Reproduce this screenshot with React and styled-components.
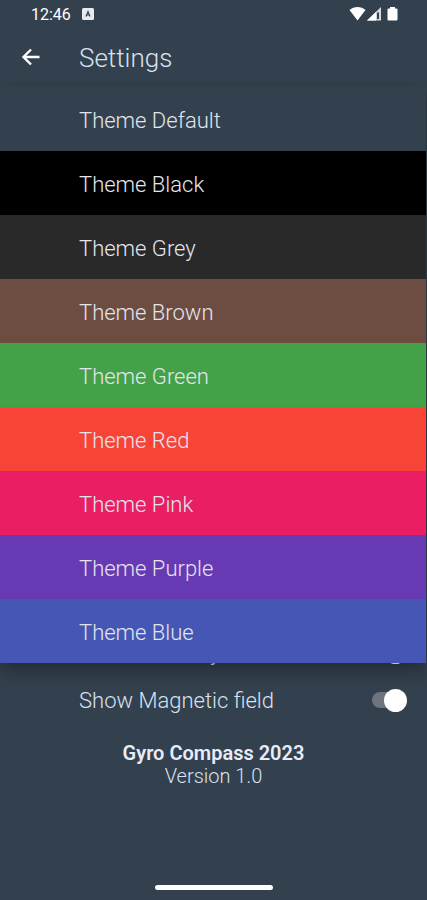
import React, { useState } from "react";
import styled, { createGlobalStyle } from "styled-components";

const themes = [
    { id: "default", name: "Theme Default", color: "#33404d" },
    { id: "black", name: "Theme Black", color: "#000000" },
    { id: "grey", name: "Theme Grey", color: "#292929" },
    { id: "brown", name: "Theme Brown", color: "#6d4c41" },
    { id: "green", name: "Theme Green", color: "#43a148" },
    { id: "red", name: "Theme Red", color: "#f84437" },
    { id: "pink", name: "Theme Pink", color: "#e91e63" },
    { id: "purple", name: "Theme Purple", color: "#673ab4" },
    { id: "blue", name: "Theme Blue", color: "#4556b5" },
];

const switches = [
    { id: "intensity", label: "Show Intensity" },
    { id: "magnetic", label: "Show Magnetic field" },
];

const StatusIcons = () => (
    <svg width="50" height="16" viewBox="0 0 50 16" fill="#fff" aria-hidden="true">
        <path d="M0.5 4C5 0 12 0 16.5 4L8.500 14.500Z" />
        <path d="M18 14.500L32 1V14.500Z" fill="#d5d9df" />
        <path d="M18 14.500L27 6V14.500Z" />
        <path d="M28 6.500H30V13H28Z" fill="#33404d" />
        <path d="M39.500 2.500H41V1H46V2.500H47.500Q48.500 2.500 48.500 3.500V13.500Q48.500 14.500 47.500 14.500H39.500Q38.500 14.500 38.500 13.500V3.500Q38.500 2.500 39.500 2.500Z" />
    </svg>
);

const App = () => {
    const [theme, setTheme] = useState("default");
    const [values, setValues] = useState({ intensity: true, magnetic: true });

    const toggle = (id) => setValues({ ...values, [id]: !values[id] });

    return (
        <Screen>
            <GlobalStyle />
            <StatusBar>
                <Clock>12:46</Clock>
                <Badge viewBox="0 0 12 12" aria-hidden="true">
                    <rect width="12" height="12" rx="1.500" fill="#e8ebee" />
                    <path d="M4 8.500L6 3.500L8 8.500M4.500 7H7.500" fill="none" stroke="#33404d" strokeWidth="1.200" />
                </Badge>
                <StatusIcons />
            </StatusBar>
            <AppBar>
                <BackButton type="button" aria-label="Back">
                    <svg width="20" height="20" viewBox="0 0 20 20" fill="none" stroke="#fff" strokeWidth="2.400">
                        <path d="M18.500 9H3M10 1.500L2.500 9L10 16.500" />
                    </svg>
                </BackButton>
                <h1>Settings</h1>
            </AppBar>
            <ThemeMenu>
                {themes.map((item) => (
                    <ThemeOption
                        key={item.id}
                        type="button"
                        $color={item.color}
                        aria-pressed={theme === item.id}
                        onClick={() => setTheme(item.id)}
                    >
                        {item.name}
                    </ThemeOption>
                ))}
            </ThemeMenu>
            <SettingsList>
                {switches.map((item) => (
                    <SettingRow key={item.id} htmlFor={item.id}>
                        <span>{item.label}</span>
                        <Switch id={item.id} type="checkbox" checked={values[item.id]} onChange={() => toggle(item.id)} />
                    </SettingRow>
                ))}
            </SettingsList>
            <About>
                <strong>Gyro Compass 2023</strong>
                <span>Version 1.0</span>
            </About>
            <HomeBar />
        </Screen>
    );
};

export default App;

const GlobalStyle = createGlobalStyle`
    * {
        box-sizing: border-box;
    }

    body {
        margin: 0;
        background: #33404d;
        font-family: Roboto, sans-serif;
    }
`;

const Screen = styled.div`
    min-height: 100vh;
    display: flex;
    flex-direction: column;
    background: #33404d;
    color: #d9e0f0;
    font-size: 22px;
    font-weight: 300;
`;

const StatusBar = styled.div`
    height: 28px;
    padding: 0 28px 0 31px;
    display: flex;
    align-items: center;

    > svg:last-child {
        margin-left: auto;
    }
`;

const Clock = styled.span`
    font-size: 16px;
    font-weight: 400;
    color: #fff;
`;

const Badge = styled.svg`
    width: 12px;
    height: 12px;
    margin-left: 11px;
`;

const AppBar = styled.header`
    height: 59px;
    padding-left: 21px;
    display: flex;
    align-items: center;

    h1 {
        margin: 0;
        font-size: 26px;
        font-weight: 300;
    }
`;

const BackButton = styled.button`
    width: 58px;
    height: 40px;
    padding: 0;
    border: 0;
    background: none;
    display: flex;
    align-items: center;
`;

const ThemeMenu = styled.div`
    position: relative;
    z-index: 1;
    margin-right: 1px;
    display: flex;
    flex-direction: column;
    box-shadow: 0 8px 16px rgba(0, 0, 0, 0.3);
`;

const ThemeOption = styled.button`
    height: 64px;
    padding: 3px 79px 0;
    border: 0;
    background: ${({ $color }) => $color};
    color: #e3e5ee;
    font: inherit;
    text-align: left;
`;

const SettingsList = styled.div`
    margin-top: -35px;
`;

const SettingRow = styled.label`
    height: 48px;
    padding: 0 19px 0 79px;
    display: flex;
    align-items: center;
    justify-content: space-between;
`;

const Switch = styled.input`
    appearance: none;
    width: 36px;
    height: 24px;
    margin: 0;
    display: flex;
    align-items: center;

    &::before {
        content: "";
        width: 32px;
        height: 16px;
        border-radius: 8px;
        background: #6d747e;
    }

    &::after {
        content: "";
        width: 23px;
        height: 23px;
        margin-left: ${({ checked }) => (checked ? "-20px" : "-32px")};
        border-radius: 50%;
        flex-shrink: 0;
        background: #fff;
    }
`;

const About = styled.footer`
    padding-top: 18px;
    display: flex;
    flex-direction: column;
    align-items: center;
    font-size: 20px;
    line-height: 23px;

    strong {
        font-weight: 600;
        color: #e8ebf8;
    }
`;

const HomeBar = styled.div`
    width: 118px;
    height: 5px;
    margin: auto auto 10px;
    border-radius: 3px;
    background: #fff;
`;
